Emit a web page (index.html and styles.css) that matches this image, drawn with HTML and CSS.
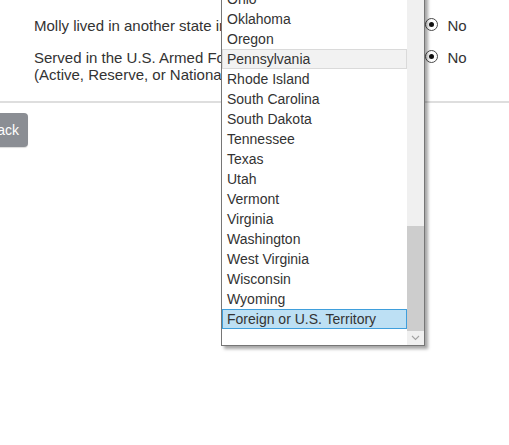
FILE: index.html
```html
<!DOCTYPE html>
<html lang="en">
<head>
<meta charset="utf-8">
<title>Residency</title>
<link rel="stylesheet" href="styles.css">
</head>
<body>
<div class="page">
  <div class="form">
    <div class="row">
      <div class="question">Molly lived in another state in 2023</div>
      <div class="options">
        <span class="opt"><span class="radio"></span><span>Yes</span></span>
        <span class="opt"><span class="radio checked"></span><span>No</span></span>
      </div>
    </div>
    <div class="row">
      <div class="question">Served in the U.S. Armed Forces<br>(Active, Reserve, or National Guard)</div>
      <div class="options">
        <span class="opt"><span class="radio"></span><span>Yes</span></span>
        <span class="opt"><span class="radio checked"></span><span>No</span></span>
      </div>
    </div>
  </div>
  <div class="divider"></div>
  <div class="actions">
    <button class="btn-back" type="button">Back</button>
  </div>

  <div class="listbox">
    <ul class="items">
      <li>Ohio</li>
      <li>Oklahoma</li>
      <li>Oregon</li>
      <li class="hover">Pennsylvania</li>
      <li>Rhode Island</li>
      <li>South Carolina</li>
      <li>South Dakota</li>
      <li>Tennessee</li>
      <li>Texas</li>
      <li>Utah</li>
      <li>Vermont</li>
      <li>Virginia</li>
      <li>Washington</li>
      <li>West Virginia</li>
      <li>Wisconsin</li>
      <li>Wyoming</li>
      <li class="selected">Foreign or U.S. Territory</li>
    </ul>
    <div class="scrollbar">
      <div class="track"></div>
      <div class="thumb"></div>
      <div class="arrow">
        <svg width="9" height="6" viewBox="0 0 9 6"><path d="M1 1 L4.5 4.5 L8 1" fill="none" stroke="#a3a3a3" stroke-width="1.1"/></svg>
      </div>
    </div>
  </div>
</div>
</body>
</html>
```

FILE: styles.css
```css
html, body {
  margin: 0;
  padding: 0;
  background: #ffffff;
  overflow: hidden;
}

.page {
  position: relative;
  width: 509px;
  height: 445px;
  font-family: "Liberation Sans", Arial, sans-serif;
  color: #333333;
}

.form {
  padding: 17px 0 0 34px;
  display: flex;
  flex-direction: column;
  gap: 15px;
}

.row {
  display: flex;
  align-items: flex-start;
  font-size: 15px;
  line-height: 17px;
}

.question {
  width: 321px;
  flex: 0 0 321px;
}

.options {
  display: flex;
  gap: 24px;
}

.opt {
  display: flex;
  align-items: flex-start;
  gap: 9px;
}

.radio {
  width: 11px;
  height: 11px;
  margin-top: 1px;
  border: 1px solid #4a4a4a;
  border-radius: 50%;
  background: #ffffff;
  display: flex;
  align-items: center;
  justify-content: center;
}

.radio.checked::after {
  content: "";
  width: 5px;
  height: 5px;
  border-radius: 50%;
  background: #111111;
}

.divider {
  margin-top: 18px;
  height: 2px;
  background: #dedede;
}

.actions {
  padding-top: 10px;
}

.btn-back {
  margin-left: -22px;
  height: 34px;
  width: 50px;
  padding: 0 9px 0 0;
  border: none;
  border-radius: 4px;
  background: #8b8e94;
  color: #ffffff;
  font-family: "Liberation Sans", Arial, sans-serif;
  font-size: 14px;
  text-align: right;
  box-shadow: 0 1px 1px rgba(0,0,0,0.15);
}

.listbox {
  position: absolute;
  left: 221px;
  top: -12px;
  width: 202px;
  height: 356px;
  border: 1px solid #767676;
  background: #ffffff;
  display: flex;
  box-shadow: 3px 3px 3px rgba(0,0,0,0.35);
}

.items {
  list-style: none;
  margin: 0;
  padding: 0;
  width: 185px;
  font-size: 14px;
  line-height: 20px;
  color: #333333;
}

.items li {
  height: 20px;
  padding-left: 5px;
  box-sizing: border-box;
  white-space: nowrap;
}

.items li.hover {
  background: #f2f2f2;
  border: 1px solid #dadada;
  line-height: 18px;
  padding-left: 4px;
}

.items li.selected {
  background: #bde0f4;
  border: 1px solid #3f9fdc;
  line-height: 18px;
  padding-left: 4px;
}

.scrollbar {
  width: 17px;
  display: flex;
  flex-direction: column;
}

.track {
  height: 237px;
  background: #f0f0f0;
}

.thumb {
  height: 105px;
  background: #cdcdcd;
}

.arrow {
  height: 14px;
  background: #f0f0f0;
  display: flex;
  align-items: center;
  justify-content: center;
}
```
